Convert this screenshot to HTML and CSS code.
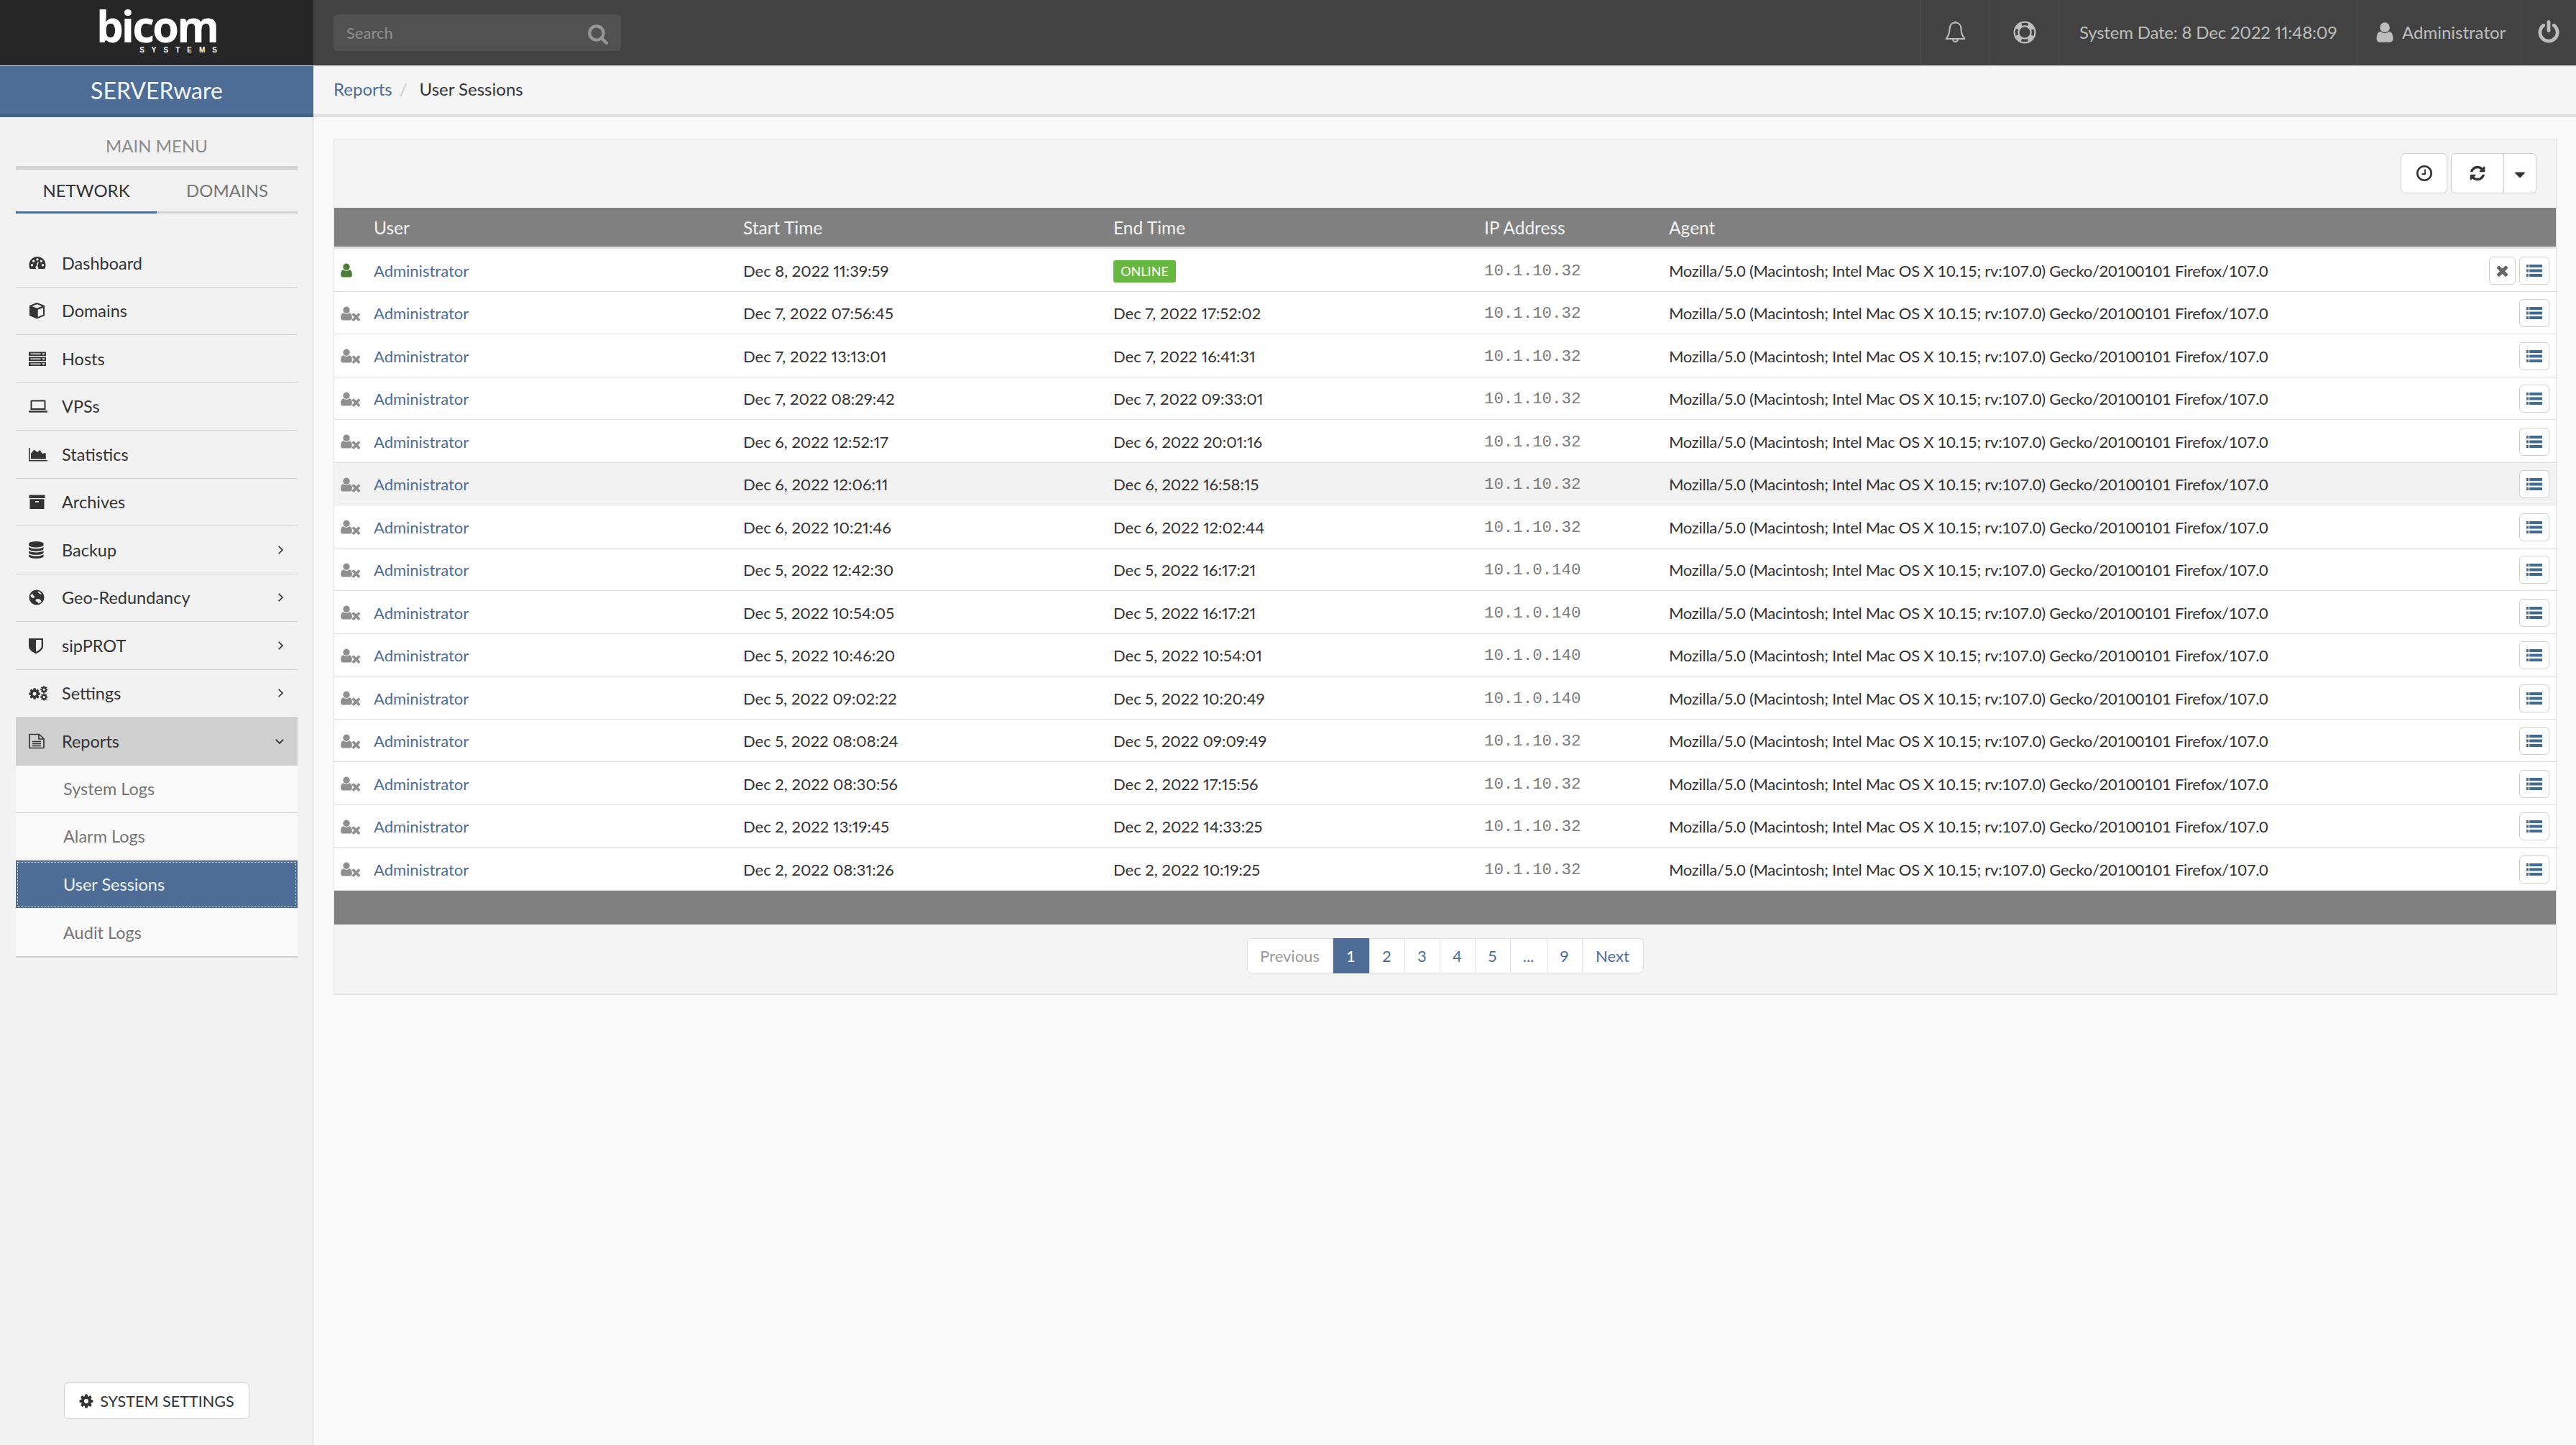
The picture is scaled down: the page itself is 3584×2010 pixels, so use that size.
FILE: index.html
```html
<!DOCTYPE html>
<html>
<head>
    <meta charset="utf-8">
    <title>User Sessions</title>
    <link rel="stylesheet" href="styles.css">
</head>
<body>
    <svg class="icon-defs" xmlns="http://www.w3.org/2000/svg">
        <symbol id="i-user" viewBox="0 0 1792 1792"><path d="M1536 1399q0 109-62.5 187t-150.5 78h-854q-88 0-150.5-78t-62.5-187q0-85 8.5-160.5t31.5-152 58.5-131 94-89 134.5-34.5q131 128 313 128t313-128q76 0 134.5 34.5t94 89 58.5 131 31.5 152 8.5 160.5zm-256-887q0 159-112.5 271.5t-271.5 112.5-271.5-112.5-112.5-271.5 112.5-271.5 271.5-112.5 271.5 112.5 112.5 271.5z"/></symbol>
        <symbol id="i-search" viewBox="0 0 1792 1792"><path d="M1216 832q0-185-131.5-316.5t-316.5-131.5-316.5 131.5-131.5 316.5 131.5 316.5 316.5 131.5 316.5-131.5 131.5-316.5zm512 832q0 52-38 90t-90 38q-54 0-90-38l-343-342q-179 124-399 124-143 0-273.5-55.5t-225-150-150-225-55.5-273.5 55.5-273.5 150-225 225-150 273.5-55.5 273.5 55.5 225 150 150 225 55.5 273.5q0 220-124 399l343 343q37 37 37 90z"/></symbol>
        <symbol id="i-refresh" viewBox="0 0 1792 1792"><path d="M1639 1056q0 5-1 7-64 268-268 434.5t-478 166.5q-146 0-282.5-55t-243.5-157l-129 129q-19 19-45 19t-45-19-19-45v-448q0-26 19-45t45-19h448q26 0 45 19t19 45-19 45l-137 137q71 66 161 102t187 36q134 0 250-65t186-179q11-17 53-117 8-23 30-23h192q13 0 22.5 9.5t9.5 22.5zm25-800v448q0 26-19 45t-45 19h-448q-26 0-45-19t-19-45 19-45l138-138q-148-137-349-137-134 0-250 65t-186 179q-11 17-53 117-8 23-30 23h-199q-13 0-22.5-9.5t-9.5-22.5v-7q65-268 270-434.5t480-166.5q146 0 284 55.5t245 156.5l130-129q19-19 45-19t45 19 19 45z"/></symbol>
        <symbol id="i-times" viewBox="0 0 1792 1792"><path d="M1490 1322q0 40-28 68l-136 136q-28 28-68 28t-68-28l-294-294-294 294q-28 28-68 28t-68-28l-136-136q-28-28-28-68t28-68l294-294-294-294q-28-28-28-68t28-68l136-136q28-28 68-28t68 28l294 294 294-294q28-28 68-28t68 28l136 136q28 28 28 68t-28 68l-294 294 294 294q28 28 28 68z"/></symbol>
        <symbol id="i-cog" viewBox="0 0 1792 1792"><path d="M1152 896q0-106-75-181t-181-75-181 75-75 181 75 181 181 75 181-75 75-181zm512-109v222q0 12-8 23t-20 13l-185 28q-19 54-39 91 35 50 107 138 10 12 10 25t-9 23q-27 37-99 108t-94 71q-12 0-26-9l-138-108q-44 23-91 38-16 136-29 186-7 28-36 28h-222q-14 0-24.5-8.5t-11.5-21.5l-28-184q-49-16-90-37l-141 107q-10 9-25 9-14 0-25-11-126-114-165-168-7-10-7-23 0-12 8-23 15-21 51-66.5t54-70.5q-27-50-41-99l-183-27q-13-2-21-12.5t-8-23.5v-222q0-12 8-23t19-13l186-28q14-46 39-92-40-57-107-138-10-12-10-24 0-10 9-23 26-36 98.5-107.5t94.5-71.5q13 0 26 10l138 107q44-23 91-38 16-136 29-186 7-28 36-28h222q14 0 24.5 8.5t11.5 21.5l28 184q49 16 90 37l142-107q9-9 24-9 13 0 25 10 129 119 165 170 7 8 7 22 0 12-8 23-15 21-51 66.5t-54 70.5q26 50 41 98l183 28q13 2 21 12.5t8 23.5z"/></symbol>
        <symbol id="i-power" viewBox="0 0 1792 1792"><path d="M1664 896q0 156-61 298t-164 245-245 164-298 61-298-61-245-164-164-245-61-298q0-182 80.5-343t226.5-270q43-32 95.5-25t83.5 50q32 42 24.5 94.5t-49.5 84.5q-98 74-151.5 181t-53.5 228q0 104 40.5 198.5t109.5 163.5 163.5 109.5 198.5 40.5 198.5-40.5 163.5-109.5 109.5-163.5 40.5-198.5q0-121-53.5-228t-151.5-181q-42-32-49.5-84.5t24.5-94.5q31-43 84-50t95 25q146 109 226.5 270t80.5 343zm-640-768v640q0 52-38 90t-90 38-90-38-38-90v-640q0-52 38-90t90-38 90 38 38 90z"/></symbol>
        <symbol id="i-caret" viewBox="0 0 1792 1792"><path d="M1408 704q0 26-19 45l-448 448q-19 19-45 19t-45-19l-448-448q-19-19-19-45t19-45 45-19h896q26 0 45 19t19 45z"/></symbol>
        <symbol id="i-database" viewBox="128 0 1536 1792" preserveAspectRatio="xMinYMid meet"><path d="M896 768q237 0 443-43t325-127v170q0 69-103 128t-280 93.5-385 34.5-385-34.5-280-93.5-103-128v-170q119 84 325 127t443 43zm0 768q237 0 443-43t325-127v170q0 69-103 128t-280 93.5-385 34.5-385-34.5-280-93.5-103-128v-170q119 84 325 127t443 43zm0-384q237 0 443-43t325-127v170q0 69-103 128t-280 93.5-385 34.5-385-34.5-280-93.5-103-128v-170q119 84 325 127t443 43zm0-1152q208 0 385 34.5t280 93.5 103 128v128q0 69-103 128t-280 93.5-385 34.5-385-34.5-280-93.5-103-128v-128q0-69 103-128t280-93.5 385-34.5z"/></symbol>
        <symbol id="i-dashboard" viewBox="0 0 24 24" preserveAspectRatio="xMinYMid meet"><path fill-rule="evenodd" d="M12 3C5.600 3 .5 8.200.5 14.600c0 1.900.4 3.700 1.200 5.400h20.600c.8-1.700 1.200-3.500 1.200-5.400C23.500 8.200 18.400 3 12 3zM4.500 16.500a1.700 1.700 0 1 1 0-3.400 1.700 1.700 0 0 1 0 3.400zm2.200-5.600a1.700 1.700 0 1 1 0-3.400 1.700 1.700 0 0 1 0 3.400zm5.300-2.300a1.700 1.700 0 1 1 0-3.400 1.700 1.700 0 0 1 0 3.400zm1.800 10a2.300 2.300 0 0 1-4.500-.6c0-.9.500-1.700 1.300-2.100l1.700-6 1.500.4-1.600 6c.7.500 1 1.400.6 2.300zM17.300 10.900a1.700 1.700 0 1 1 0-3.400 1.700 1.700 0 0 1 0 3.400zm2.200 5.600a1.700 1.700 0 1 1 0-3.400 1.700 1.700 0 0 1 0 3.400z"/></symbol>
        <symbol id="i-cube" viewBox="0 0 24 24" preserveAspectRatio="xMinYMid meet"><path fill-rule="evenodd" d="M11.500 1 1 5v14l10.500 4.500L22 19V5L11.500 1zm0 2.300L18.500 6l-7 2.800L4.500 6l7-2.700zM12.700 20.800v-10l7.300-2.900v9.900l-7.300 3z"/></symbol>
        <symbol id="i-server" viewBox="0 0 24 24" preserveAspectRatio="xMinYMid meet"><path fill-rule="evenodd" d="M0 2.500h24v5.500H0V2.500zm2.500 2v1.500h14V4.500h-14zm16.500-.3v2h3v-2h-3zM0 9.500h24V15H0V9.500zm2.500 2V13h14v-1.500h-14zm16.500-.3v2h3v-2h-3zM0 16.500h24V22H0v-5.500zm2.500 2V20h14v-1.500h-14zm16.500-.3v2h3v-2h-3z"/></symbol>
        <symbol id="i-laptop" viewBox="0 0 26 24" preserveAspectRatio="xMinYMid meet"><path fill-rule="evenodd" d="M4 3.500h18a1.500 1.500 0 0 1 1.500 1.500v12h-21V5A1.500 1.500 0 0 1 4 3.500zM4.500 5.500V15h17V5.500h-17zM0 18.200h26v1.300q0 1.300-1.500 1.300h-23Q0 20.800 0 19.500v-1.300z"/></symbol>
        <symbol id="i-chart" viewBox="0 0 26 24" preserveAspectRatio="xMinYMid meet"><path d="M0 3h1.600v17H26v1.600H0V3zm3 15.500V11l4.500-5.500L12 9l3.500-3 3 5 5-1 .5 8.500H3z"/></symbol>
        <symbol id="i-archive" viewBox="0 0 24 24" preserveAspectRatio="xMinYMid meet"><path fill-rule="evenodd" d="M.5 2.500h22v4.500H.5V2.500zm1 5.800h20V22h-20V8.300zm7.500 2.700v1.800h5V11H9z"/></symbol>
        <symbol id="i-globe" viewBox="0 0 24 24" preserveAspectRatio="xMinYMid meet"><path d="M11 1.500a10.500 10.500 0 1 0 0 21 10.500 10.500 0 0 0 0-21zm-8.300 7 3.800-1.800-1 2.300 2.600 1-.9 3-2.700-.5-2-2.500.2-1.500zm11 12-1.500-2.300-2.800-1.200.6-2.600 4-.4 2.700 1.800 1 2.300a8.500 8.500 0 0 1-4 2.400zM18 8l-3-1-2.700-2.800 1.700-.7a8.600 8.600 0 0 1 4 4.500z"/></symbol>
        <symbol id="i-shield" viewBox="0 0 20 24" preserveAspectRatio="xMinYMid meet"><path fill-rule="evenodd" d="M0 2h20v11c0 5-5.500 8-10 10.500C5.500 21 0 18 0 13V2zm10 2v16.800c3.300-1.800 7.700-4.200 7.700-7.800V4H10z"/></symbol>
        <symbol id="i-cogs" viewBox="0 0 1792 1350" preserveAspectRatio="xMinYMid meet"><use href="#i-cog" x="-70" y="140" width="1210" height="1210"/><use href="#i-cog" x="1020" y="-30" width="770" height="770"/><use href="#i-cog" x="1020" y="660" width="770" height="770"/></symbol>
        <symbol id="i-file" viewBox="0 0 24 24" preserveAspectRatio="xMinYMid meet"><path fill="none" stroke="currentColor" stroke-width="1.700" d="M1 2.500h13.500l6.500 6v12q0 1-1 1H2q-1 0-1-1v-18zM14 2.500v6.500h7M5 12.500h12M5 15.500h12M5 18.500h12"/></symbol>
        <symbol id="i-right" viewBox="0 0 24 24"><path fill="none" stroke="currentColor" stroke-width="3" d="m8 3 9 9-9 9"/></symbol>
        <symbol id="i-down" viewBox="0 0 24 24"><path fill="none" stroke="currentColor" stroke-width="3" d="m3 8 9 9 9-9"/></symbol>
        <symbol id="i-bell" viewBox="0 0 29 31"><path fill="none" stroke="currentColor" stroke-width="2" stroke-linejoin="round" d="M14.500 2.500C9 2.500 6.500 6.500 6.500 11.500c0 6-2 10-5 13.500h26c-3-3.500-5-7.500-5-13.500 0-5-2.500-9-8-9zM14.500 .5v2M11 25.500a3.500 3.500 0 0 0 7 0"/></symbol>
        <symbol id="i-ring" viewBox="0 0 32 32"><circle cx="16" cy="16" r="11.500" fill="none" stroke="currentColor" stroke-width="8"/><circle cx="16" cy="16" r="11.500" fill="none" stroke="#424242" stroke-width="3.500" stroke-dasharray="9 9.060" stroke-dashoffset="4.500"/></symbol>
        <symbol id="i-clock" viewBox="0 0 24 24"><path fill="none" stroke="currentColor" stroke-width="2.600" d="M12 2.300a9.700 9.700 0 1 0 0 19.400 9.700 9.700 0 0 0 0-19.400z"/><path fill="none" stroke="currentColor" stroke-width="1.800" d="M13 6.500V13H8.500"/></symbol>
        <symbol id="i-list" viewBox="0 0 26 20"><path d="M0 0h3.500v4.600H0zM5 0h21v4.600H5zM0 7.700h3.500v4.600H0zM5 7.700h21v4.600H5zM0 15.400h3.500V20H0zM5 15.400h21V20H5z"/></symbol>
    </svg>

    <header class="topbar">
        <div class="logo">
            <span class="logo-name">bicom</span>
            <span class="logo-sub">SYSTEMS</span>
        </div>
        <div class="topbar-main">
            <div class="search">
                <span>Search</span>
                <svg class="search-icon"><use href="#i-search"/></svg>
            </div>
            <div class="top-item top-icon"><svg class="bell"><use href="#i-bell"/></svg></div>
            <div class="top-item top-icon"><svg class="ring"><use href="#i-ring"/></svg></div>
            <div class="top-item top-date">System Date: 8 Dec 2022 11:48:09</div>
            <div class="top-item top-user"><svg class="top-user-icon"><use href="#i-user"/></svg>Administrator</div>
            <div class="top-item top-power"><svg class="power"><use href="#i-power"/></svg></div>
        </div>
    </header>

    <div class="layout">
        <aside class="sidebar">
            <div class="brand">SERVERware</div>
            <div class="menu-title">MAIN MENU</div>
            <div class="tabs">
                <div class="tab active">NETWORK</div>
                <div class="tab">DOMAINS</div>
            </div>
            <nav class="menu">
                <a class="menu-item"><svg class="menu-icon"><use href="#i-dashboard"/></svg>Dashboard</a>
                <a class="menu-item"><svg class="menu-icon"><use href="#i-cube"/></svg>Domains</a>
                <a class="menu-item"><svg class="menu-icon"><use href="#i-server"/></svg>Hosts</a>
                <a class="menu-item"><svg class="menu-icon"><use href="#i-laptop"/></svg>VPSs</a>
                <a class="menu-item"><svg class="menu-icon"><use href="#i-chart"/></svg>Statistics</a>
                <a class="menu-item"><svg class="menu-icon"><use href="#i-archive"/></svg>Archives</a>
                <a class="menu-item"><svg class="menu-icon"><use href="#i-database"/></svg>Backup<svg class="chevron"><use href="#i-right"/></svg></a>
                <a class="menu-item"><svg class="menu-icon"><use href="#i-globe"/></svg>Geo-Redundancy<svg class="chevron"><use href="#i-right"/></svg></a>
                <a class="menu-item"><svg class="menu-icon"><use href="#i-shield"/></svg>sipPROT<svg class="chevron"><use href="#i-right"/></svg></a>
                <a class="menu-item"><svg class="menu-icon"><use href="#i-cogs"/></svg>Settings<svg class="chevron"><use href="#i-right"/></svg></a>
                <a class="menu-item open"><svg class="menu-icon"><use href="#i-file"/></svg>Reports<svg class="chevron chevron-down"><use href="#i-down"/></svg></a>
                <div class="submenu">
                    <a class="sub-item">System Logs</a>
                    <a class="sub-item">Alarm Logs</a>
                    <a class="sub-item current">User Sessions</a>
                    <a class="sub-item">Audit Logs</a>
                </div>
            </nav>
            <button class="system-btn"><svg class="system-icon"><use href="#i-cog"/></svg>SYSTEM SETTINGS</button>
        </aside>

        <main class="main">
            <div class="breadcrumb">
                <a>Reports</a><span class="crumb-sep">/</span><span class="crumb-current">User Sessions</span>
            </div>
            <div class="content">
                <section class="panel">
                    <div class="toolbar">
                        <button class="tool-btn tool-clock"><svg class="tool-icon"><use href="#i-clock"/></svg></button>
                        <div class="tool-group">
                            <button class="tool-btn tool-refresh"><svg class="tool-icon"><use href="#i-refresh"/></svg></button>
                            <button class="tool-btn tool-caret"><svg class="caret-icon"><use href="#i-caret"/></svg></button>
                        </div>
                    </div>
                    <div class="table">
                        <div class="row head">
                            <div></div><div>User</div><div>Start Time</div><div>End Time</div><div>IP Address</div><div>Agent</div><div></div>
                        </div>
                        <div class="row">
                            <div><svg class="status status-on"><use href="#i-user"/></svg></div><div><a>Administrator</a></div><div class="time">Dec 8, 2022 11:39:59</div><div><span class="badge">ONLINE</span></div><div class="ip">10.1.10.32</div><div class="agent">Mozilla/5.0 (Macintosh; Intel Mac OS X 10.15; rv:107.0) Gecko/20100101 Firefox/107.0</div>
                            <div class="actions"><button class="act-btn act-kill"><svg class="kill-icon"><use href="#i-times"/></svg></button><button class="act-btn"><svg class="list-icon"><use href="#i-list"/></svg></button></div>
                        </div>
                        <div class="row">
                            <div class="off"><svg class="status"><use href="#i-user"/></svg><svg class="status-x"><use href="#i-times"/></svg></div><div><a>Administrator</a></div><div class="time">Dec 7, 2022 07:56:45</div><div class="time">Dec 7, 2022 17:52:02</div><div class="ip">10.1.10.32</div><div class="agent">Mozilla/5.0 (Macintosh; Intel Mac OS X 10.15; rv:107.0) Gecko/20100101 Firefox/107.0</div>
                            <div class="actions"><button class="act-btn"><svg class="list-icon"><use href="#i-list"/></svg></button></div>
                        </div>
                        <div class="row">
                            <div class="off"><svg class="status"><use href="#i-user"/></svg><svg class="status-x"><use href="#i-times"/></svg></div><div><a>Administrator</a></div><div class="time">Dec 7, 2022 13:13:01</div><div class="time">Dec 7, 2022 16:41:31</div><div class="ip">10.1.10.32</div><div class="agent">Mozilla/5.0 (Macintosh; Intel Mac OS X 10.15; rv:107.0) Gecko/20100101 Firefox/107.0</div>
                            <div class="actions"><button class="act-btn"><svg class="list-icon"><use href="#i-list"/></svg></button></div>
                        </div>
                        <div class="row">
                            <div class="off"><svg class="status"><use href="#i-user"/></svg><svg class="status-x"><use href="#i-times"/></svg></div><div><a>Administrator</a></div><div class="time">Dec 7, 2022 08:29:42</div><div class="time">Dec 7, 2022 09:33:01</div><div class="ip">10.1.10.32</div><div class="agent">Mozilla/5.0 (Macintosh; Intel Mac OS X 10.15; rv:107.0) Gecko/20100101 Firefox/107.0</div>
                            <div class="actions"><button class="act-btn"><svg class="list-icon"><use href="#i-list"/></svg></button></div>
                        </div>
                        <div class="row">
                            <div class="off"><svg class="status"><use href="#i-user"/></svg><svg class="status-x"><use href="#i-times"/></svg></div><div><a>Administrator</a></div><div class="time">Dec 6, 2022 12:52:17</div><div class="time">Dec 6, 2022 20:01:16</div><div class="ip">10.1.10.32</div><div class="agent">Mozilla/5.0 (Macintosh; Intel Mac OS X 10.15; rv:107.0) Gecko/20100101 Firefox/107.0</div>
                            <div class="actions"><button class="act-btn"><svg class="list-icon"><use href="#i-list"/></svg></button></div>
                        </div>
                        <div class="row hover">
                            <div class="off"><svg class="status"><use href="#i-user"/></svg><svg class="status-x"><use href="#i-times"/></svg></div><div><a>Administrator</a></div><div class="time">Dec 6, 2022 12:06:11</div><div class="time">Dec 6, 2022 16:58:15</div><div class="ip">10.1.10.32</div><div class="agent">Mozilla/5.0 (Macintosh; Intel Mac OS X 10.15; rv:107.0) Gecko/20100101 Firefox/107.0</div>
                            <div class="actions"><button class="act-btn"><svg class="list-icon"><use href="#i-list"/></svg></button></div>
                        </div>
                        <div class="row">
                            <div class="off"><svg class="status"><use href="#i-user"/></svg><svg class="status-x"><use href="#i-times"/></svg></div><div><a>Administrator</a></div><div class="time">Dec 6, 2022 10:21:46</div><div class="time">Dec 6, 2022 12:02:44</div><div class="ip">10.1.10.32</div><div class="agent">Mozilla/5.0 (Macintosh; Intel Mac OS X 10.15; rv:107.0) Gecko/20100101 Firefox/107.0</div>
                            <div class="actions"><button class="act-btn"><svg class="list-icon"><use href="#i-list"/></svg></button></div>
                        </div>
                        <div class="row">
                            <div class="off"><svg class="status"><use href="#i-user"/></svg><svg class="status-x"><use href="#i-times"/></svg></div><div><a>Administrator</a></div><div class="time">Dec 5, 2022 12:42:30</div><div class="time">Dec 5, 2022 16:17:21</div><div class="ip">10.1.0.140</div><div class="agent">Mozilla/5.0 (Macintosh; Intel Mac OS X 10.15; rv:107.0) Gecko/20100101 Firefox/107.0</div>
                            <div class="actions"><button class="act-btn"><svg class="list-icon"><use href="#i-list"/></svg></button></div>
                        </div>
                        <div class="row">
                            <div class="off"><svg class="status"><use href="#i-user"/></svg><svg class="status-x"><use href="#i-times"/></svg></div><div><a>Administrator</a></div><div class="time">Dec 5, 2022 10:54:05</div><div class="time">Dec 5, 2022 16:17:21</div><div class="ip">10.1.0.140</div><div class="agent">Mozilla/5.0 (Macintosh; Intel Mac OS X 10.15; rv:107.0) Gecko/20100101 Firefox/107.0</div>
                            <div class="actions"><button class="act-btn"><svg class="list-icon"><use href="#i-list"/></svg></button></div>
                        </div>
                        <div class="row">
                            <div class="off"><svg class="status"><use href="#i-user"/></svg><svg class="status-x"><use href="#i-times"/></svg></div><div><a>Administrator</a></div><div class="time">Dec 5, 2022 10:46:20</div><div class="time">Dec 5, 2022 10:54:01</div><div class="ip">10.1.0.140</div><div class="agent">Mozilla/5.0 (Macintosh; Intel Mac OS X 10.15; rv:107.0) Gecko/20100101 Firefox/107.0</div>
                            <div class="actions"><button class="act-btn"><svg class="list-icon"><use href="#i-list"/></svg></button></div>
                        </div>
                        <div class="row">
                            <div class="off"><svg class="status"><use href="#i-user"/></svg><svg class="status-x"><use href="#i-times"/></svg></div><div><a>Administrator</a></div><div class="time">Dec 5, 2022 09:02:22</div><div class="time">Dec 5, 2022 10:20:49</div><div class="ip">10.1.0.140</div><div class="agent">Mozilla/5.0 (Macintosh; Intel Mac OS X 10.15; rv:107.0) Gecko/20100101 Firefox/107.0</div>
                            <div class="actions"><button class="act-btn"><svg class="list-icon"><use href="#i-list"/></svg></button></div>
                        </div>
                        <div class="row">
                            <div class="off"><svg class="status"><use href="#i-user"/></svg><svg class="status-x"><use href="#i-times"/></svg></div><div><a>Administrator</a></div><div class="time">Dec 5, 2022 08:08:24</div><div class="time">Dec 5, 2022 09:09:49</div><div class="ip">10.1.10.32</div><div class="agent">Mozilla/5.0 (Macintosh; Intel Mac OS X 10.15; rv:107.0) Gecko/20100101 Firefox/107.0</div>
                            <div class="actions"><button class="act-btn"><svg class="list-icon"><use href="#i-list"/></svg></button></div>
                        </div>
                        <div class="row">
                            <div class="off"><svg class="status"><use href="#i-user"/></svg><svg class="status-x"><use href="#i-times"/></svg></div><div><a>Administrator</a></div><div class="time">Dec 2, 2022 08:30:56</div><div class="time">Dec 2, 2022 17:15:56</div><div class="ip">10.1.10.32</div><div class="agent">Mozilla/5.0 (Macintosh; Intel Mac OS X 10.15; rv:107.0) Gecko/20100101 Firefox/107.0</div>
                            <div class="actions"><button class="act-btn"><svg class="list-icon"><use href="#i-list"/></svg></button></div>
                        </div>
                        <div class="row">
                            <div class="off"><svg class="status"><use href="#i-user"/></svg><svg class="status-x"><use href="#i-times"/></svg></div><div><a>Administrator</a></div><div class="time">Dec 2, 2022 13:19:45</div><div class="time">Dec 2, 2022 14:33:25</div><div class="ip">10.1.10.32</div><div class="agent">Mozilla/5.0 (Macintosh; Intel Mac OS X 10.15; rv:107.0) Gecko/20100101 Firefox/107.0</div>
                            <div class="actions"><button class="act-btn"><svg class="list-icon"><use href="#i-list"/></svg></button></div>
                        </div>
                        <div class="row">
                            <div class="off"><svg class="status"><use href="#i-user"/></svg><svg class="status-x"><use href="#i-times"/></svg></div><div><a>Administrator</a></div><div class="time">Dec 2, 2022 08:31:26</div><div class="time">Dec 2, 2022 10:19:25</div><div class="ip">10.1.10.32</div><div class="agent">Mozilla/5.0 (Macintosh; Intel Mac OS X 10.15; rv:107.0) Gecko/20100101 Firefox/107.0</div>
                            <div class="actions"><button class="act-btn"><svg class="list-icon"><use href="#i-list"/></svg></button></div>
                        </div>
                    </div>
                    <div class="table-foot"></div>
                    <div class="pager-wrap">
                        <div class="pager">
                            <a class="page page-prev">Previous</a>
                            <a class="page page-active">1</a>
                            <a class="page page-n">2</a>
                            <a class="page page-n">3</a>
                            <a class="page page-n">4</a>
                            <a class="page page-n">5</a>
                            <a class="page page-dots">...</a>
                            <a class="page page-n">9</a>
                            <a class="page page-next">Next</a>
                        </div>
                    </div>
                </section>
            </div>
        </main>
    </div>
</body>
</html>
```

FILE: styles.css
```css
* {
    box-sizing: border-box;
}
html, body {
    height: 100%;
}
body {
    margin: 0;
    display: flex;
    flex-direction: column;
    overflow: hidden;
    background: #fafafa;
    color: #333;
    font-family: Lato, "Open Sans", sans-serif;
    font-size: 24px;
}
a {
    color: inherit;
    text-decoration: none;
}
button {
    font-family: inherit;
    cursor: pointer;
}
svg {
    fill: currentColor;
    display: block;
    flex: none;
}
.icon-defs {
    width: 0;
    height: 0;
    overflow: hidden;
    position: absolute;
}

/* top bar */
.topbar {
    display: flex;
    height: 92px;
    flex: none;
    border-bottom: 1px solid #e6e6e6;
}
.logo {
    width: 436px;
    background: #262626;
    color: #fff;
    display: flex;
    flex-direction: column;
    align-items: center;
    line-height: 1;
}
.logo-name {
    font-family: "Open Sans", Lato, sans-serif;
    font-weight: 700;
    font-size: 60px;
    line-height: 50px;
    height: 52px;
    margin-top: 11px;
    letter-spacing: -3px;
}
.logo-sub {
    align-self: flex-end;
    margin-right: 124px;
    margin-top: 2px;
    font-family: "Liberation Sans", sans-serif;
    font-weight: 700;
    font-size: 10px;
    letter-spacing: 10px;
}
.topbar-main {
    flex: 1;
    display: flex;
    align-items: stretch;
    background: #424242;
    color: #bdbdbd;
}
.search {
    width: 400px;
    height: 51px;
    margin: 20px auto 0 28px;
    padding: 0 18px;
    background: #515151;
    border-radius: 6px;
    color: #8f8f8f;
    font-size: 22px;
    display: flex;
    align-items: center;
    justify-content: space-between;
}
.search-icon {
    width: 30px;
    height: 30px;
    color: #969696;
    margin-right: -1px;
    margin-top: 2px;
}
.top-item {
    display: flex;
    align-items: center;
    height: 89px;
    border-left: 1px solid #4f4f4f;
}
.top-icon {
    width: 96px;
    justify-content: center;
}
.bell {
    width: 29px;
    height: 31px;
}
.ring {
    width: 32px;
    height: 32px;
}
.top-date {
    width: 415px;
    padding-left: 28px;
    font-variant-numeric: proportional-nums;
    letter-spacing: -.2px;
}
.top-user {
    width: 228px;
    padding-left: 27px;
}
.top-user-icon {
    width: 34px;
    height: 32px;
    margin-right: 7px;
    margin-left: -6px;
}
.top-power {
    width: 77px;
    padding-left: 21px;
}
.power {
    width: 34px;
    height: 34px;
}

/* sidebar */
.layout {
    flex: 1;
    display: flex;
    min-height: 0;
}
.sidebar {
    width: 436px;
    background: #f2f2f2;
    border-right: 1px solid #cfcfcf;
    display: flex;
    flex-direction: column;
}
.brand {
    height: 71px;
    margin-right: -1px;
    background: #4d6d96;
    border-bottom: 5px solid #466488;
    color: #f2f5f8;
    font-size: 32px;
    display: flex;
    align-items: center;
    justify-content: center;
}
.menu-title {
    height: 73px;
    margin: 0 21px 0 22px;
    border-bottom: 5px solid #d2d2d2;
    color: #8c8c8c;
    display: flex;
    align-items: center;
    justify-content: center;
    padding-top: 11px;
}
.tabs {
    display: flex;
    margin: 0 21px 0 22px;
}
.tab {
    flex: 1;
    height: 61px;
    padding-bottom: 2px;
    border-bottom: 3px solid #d2d2d2;
    color: #777;
    display: flex;
    align-items: center;
    justify-content: center;
}
.tab.active {
    color: #333;
    border-bottom-color: #4d6d96;
}
.menu {
    margin: 36px 21px 0 22px;
    font-size: 23.500px;
}
.menu-item {
    height: 66.500px;
    padding: 0 18px;
    border-bottom: 1px solid #cfcfcf;
    color: #333;
    display: flex;
    align-items: center;
}
.menu-icon {
    width: 27px;
    height: 24px;
    margin-right: 19px;
    color: #333;
}
.chevron {
    width: 14px;
    height: 14px;
    margin-left: auto;
    margin-right: -1px;
}
.chevron-down {
    width: 16px;
}
.menu-item.open {
    background: #d0d0d0;
    border-bottom: 0;
}
.submenu {
    background: #fafafa;
    border-bottom: 2px solid #cfcfcf;
}
.sub-item {
    height: 66.300px;
    padding-left: 66px;
    border-bottom: 1px solid #cfcfcf;
    color: #757575;
    display: flex;
    align-items: center;
}
.sub-item:last-child {
    border-bottom: 0;
}
.sub-item.current {
    background: #4d6d96;
    color: #f0f3f7;
    outline: 1px dotted #e8ecf2;
    outline-offset: -3px;
    border-bottom: 0;
}
.system-btn {
    align-self: center;
    margin: auto 0 36px;
    width: 258px;
    height: 51px;
    background: #fff;
    border: 1px solid #cfcfcf;
    border-radius: 6px;
    color: #333;
    font-size: 21.600px;
    display: flex;
    align-items: center;
    justify-content: center;
}
.system-icon {
    width: 22px;
    height: 22px;
    margin-right: 8px;
}

/* main */
.main {
    flex: 1;
    min-width: 0;
    display: flex;
    flex-direction: column;
}
.breadcrumb {
    height: 71px;
    padding: 0 0 4px 28px;
    background: #f5f5f5;
    border-bottom: 5px solid #e2e2e2;
    display: flex;
    align-items: center;
    color: #333;
}
.breadcrumb a {
    color: #4d6d96;
}
.crumb-sep {
    margin: 0 17px 0 10px;
    color: #ccc;
}
.content {
    padding: 31px 27px 0 28px;
}
.panel {
    background: #f4f4f4;
    border: 1px solid #e3e3e3;
    border-bottom-width: 2px;
}
.toolbar {
    height: 94px;
    padding: 18px 27px 0 0;
    display: flex;
    justify-content: flex-end;
    gap: 5px;
}
.tool-btn {
    height: 56px;
    background: #fff;
    border: 1px solid #cfcfcf;
    border-radius: 6px;
    color: #333;
    display: flex;
    align-items: center;
    justify-content: center;
    padding: 0;
}
.tool-clock {
    width: 65px;
}
.tool-group {
    display: flex;
}
.tool-refresh {
    width: 74px;
    border-radius: 6px 0 0 6px;
}
.tool-caret {
    width: 45px;
    border-left: 0;
    border-radius: 0 6px 6px 0;
}
.tool-icon {
    width: 24px;
    height: 24px;
}
.caret-icon {
    width: 24px;
    height: 24px;
    margin-top: 4px;
}
.row {
    display: grid;
    grid-template-columns: 55px 514px 515px 516px 257px 1fr 120px;
    align-items: center;
    height: 59.530px;
    padding-top: 2px;
    background: #fff;
    border-bottom: 1px solid #e0e0e0;
    font-size: 22px;
    color: #333;
}
.row.head {
    height: 57px;
    padding-top: 0;
    background: #808080;
    border-bottom: 3px solid #e0e0e0;
    color: #f2f2f2;
    font-size: 24.500px;
}
.row.hover {
    background: #f2f2f2;
}
.row a {
    color: #4d6d96;
}
.time {
    font-variant-numeric: proportional-nums;
}
.agent {
    letter-spacing: -.27px;
}
.status {
    width: 22px;
    height: 22px;
    margin-left: 6px;
}
.status-on {
    color: #4c7d38;
}
.off {
    display: flex;
    align-items: center;
    color: #8f8f8f;
}
.status-x {
    width: 17px;
    height: 17px;
    margin: 9px 0 0 -6px;
}
.badge {
    display: block;
    width: 87px;
    background: #67b840;
    color: #fff;
    font-size: 18px;
    line-height: 31px;
    height: 31px;
    text-align: center;
    border-radius: 3px;
    margin-top: 3px;
}
.ip {
    padding-top: 1px;
    font-family: "Liberation Mono", monospace;
    font-size: 22.400px;
    color: #7a7a7a;
}
.actions {
    display: flex;
    justify-content: flex-end;
    gap: 5px;
    padding-right: 9px;
}
.act-btn {
    width: 42px;
    height: 39px;
    padding: 0;
    background: #fff;
    border: 1px solid #cfcfcf;
    border-radius: 6px;
    display: flex;
    align-items: center;
    justify-content: center;
    color: #3f6a93;
}
.act-kill {
    width: 37px;
    color: #666;
}
.kill-icon {
    width: 23px;
    height: 23px;
}
.list-icon {
    width: 22px;
    height: 17px;
}
.table-foot {
    height: 47px;
    background: #808080;
}
.pager-wrap {
    height: 96px;
    padding-top: 19px;
    display: flex;
    justify-content: center;
}
.pager {
    display: flex;
    height: 49px;
    background: #fff;
    border: 1px solid #e0e0e0;
    border-radius: 6px;
    font-size: 22px;
}
.page {
    display: flex;
    align-items: center;
    justify-content: center;
    border-right: 1px solid #e0e0e0;
    color: #4d6d96;
}
.page-prev {
    width: 119px;
    color: #9a9a9a;
}
.page-active {
    width: 51px;
    background: #4d6d96;
    color: #fff;
    margin: -1px 0;
}
.page-n {
    width: 49px;
}
.page-dots {
    width: 51px;
}
.page-next {
    width: 84px;
    border-right: 0;
}
```
